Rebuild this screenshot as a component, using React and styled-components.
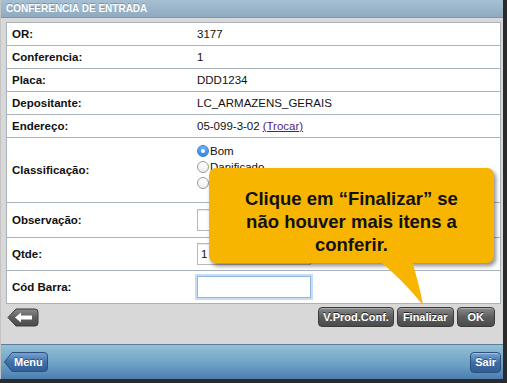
import React from 'react'
import styled, { createGlobalStyle } from 'styled-components'

const GlobalStyle = createGlobalStyle`
  html, body { margin: 0; padding: 0; background: #2b2b2b; }
  body { font-family: "Liberation Sans", Arial, sans-serif; }
`

const rows = [
  { label: 'OR:', value: '3177' },
  { label: 'Conferencia:', value: '1' },
  { label: 'Placa:', value: 'DDD1234' },
  { label: 'Depositante:', value: 'LC_ARMAZENS_GERAIS' },
  { label: 'Endereço:', value: '05-099-3-02', link: '(Trocar)' }
]

const Screen = styled.div`
  position: relative;
  width: 503px;
  height: 379px;
  background: #d8d8d8;
  display: flex;
  flex-direction: column;
  border-left: 1px solid #c4c4c4;
  box-sizing: border-box;
  overflow: hidden;
`

const Header = styled.div`
  height: 17px;
  background: linear-gradient(#a6bfd2, #8faac0);
  border-bottom: 1px solid #7c95a9;
  color: #fff;
  font-weight: bold;
  font-size: 10px;
  line-height: 17px;
  padding-left: 5px;
  text-shadow: 0 -1px 0 rgba(60, 80, 100, 0.4);
`

const Table = styled.div`
  margin: 4px 2px 0 5px;
  background: #fff;
  border: 1px solid #a8b3bd;
  display: grid;
  grid-template-columns: 190px 1fr;
`

const Row = styled.div`
  display: contents;
  & > div {
    height: ${p => p.h}px;
    border-top: ${p => (p.first ? 'none' : '1px solid #a8b3bd')};
  }
`

const Label = styled.div`
  display: flex;
  align-items: center;
  padding-left: 5px;
  font-weight: bold;
  font-size: 11.5px;
  color: #111;
`

const Value = styled.div`
  display: flex;
  align-items: center;
  font-size: 11.5px;
  color: #111;
`

const Link = styled.a`
  color: #551a8b;
  text-decoration: underline;
  margin-left: 3px;
`

const RadioList = styled.div`
  display: flex;
  flex-direction: column;
  justify-content: flex-start;
  padding-top: 7px;
  gap: 4px;
  height: 100%;
  box-sizing: border-box;
`

const RadioItem = styled.label`
  display: flex;
  align-items: center;
  font-size: 11.5px;
  color: #111;
  height: 12px;
`

const RadioDot = styled.span`
  width: 12px;
  height: 12px;
  border-radius: 50%;
  box-sizing: border-box;
  margin-right: 1px;
  display: flex;
  align-items: center;
  justify-content: center;
  background: ${p => (p.checked ? 'linear-gradient(#6fb1f5, #2f86ea)' : 'linear-gradient(#fff, #eee)')};
  border: 1px solid ${p => (p.checked ? '#3a80d0' : '#9a9a9a')};
  &::after {
    content: '';
    width: 4px;
    height: 4px;
    border-radius: 50%;
    background: #fff;
    display: ${p => (p.checked ? 'block' : 'none')};
  }
`

const Input = styled.div`
  width: 114px;
  height: 22px;
  box-sizing: border-box;
  background: #fff;
  border: 1px solid ${p => (p.focus ? '#8fb6e0' : '#b9b9b9')};
  box-shadow: ${p => (p.focus ? '0 0 0 2px #c8dcf3' : 'inset 0 1px 1px rgba(0,0,0,0.08)')};
  font-size: 11.5px;
  padding-left: 3px;
  display: flex;
  align-items: center;
`

const ButtonBar = styled.div`
  display: flex;
  align-items: center;
  margin: 3px 8px 0 6px;
  height: 20px;
`

const Spacer = styled.div`
  flex: 1;
`

const DarkButton = styled.button`
  height: 20px;
  padding: 0 ${p => p.px || 4}px;
  margin-left: 3px;
  border-radius: 4px;
  border: 1px solid #3a3a3a;
  background: linear-gradient(#8a8a8a, #5d5d5d 50%, #4b4b4b);
  color: #fff;
  font-family: "Liberation Sans", Arial, sans-serif;
  font-weight: bold;
  font-size: 11px;
  text-shadow: 0 -1px 0 #222;
  box-shadow: inset 0 1px 0 rgba(255,255,255,0.3);
  cursor: pointer;
`

const BottomBar = styled.div`
  margin-top: auto;
  height: 35px;
  background: linear-gradient(#93c0d6, #6a9fc4 60%, #4b7db0);
  border-top: 1px solid #5d7f99;
  display: flex;
  align-items: center;
  justify-content: space-between;
  padding: 0 2px 0 3px;
  box-sizing: border-box;
`

const BarButton = styled.div`
  position: relative;
  height: 20px;
  width: 44px;
  display: flex;
  align-items: center;
  color: #fff;
  font-weight: bold;
  font-size: 11px;
  text-shadow: 0 -1px 0 rgba(0,0,0,0.4);
`

const BarLabel = styled.span`
  position: relative;
  margin-left: 10px;
`

const SairButton = styled.div`
  height: 19px;
  padding: 0 4px;
  border-radius: 4px;
  border: 1px solid #2c4f7c;
  background: linear-gradient(#78a3d3, #3f6ea6 50%, #2f5d94);
  color: #fff;
  font-weight: bold;
  font-size: 11px;
  line-height: 19px;
  text-shadow: 0 -1px 0 rgba(0,0,0,0.4);
  box-shadow: inset 0 1px 0 rgba(255,255,255,0.35);
`

const Callout = styled.div`
  position: absolute;
  left: 208px;
  top: 168px;
  width: 285px;
  height: 95px;
  box-sizing: border-box;
  background: #f7b500;
  border-radius: 7px;
  box-shadow: 2px 3px 4px rgba(0,0,0,0.45);
  display: flex;
  align-items: center;
  justify-content: center;
  text-align: center;
  font-weight: bold;
  font-size: 18.5px;
  line-height: 23px;
  color: #111;
  padding-top: 12px;
`

const Tail = styled.svg`
  position: absolute;
  left: 370px;
  top: 258px;
  overflow: visible;
`

const BackArrow = () => (
  <svg width="32" height="19" viewBox="0 0 32 19">
    <defs>
      <linearGradient id="bg" x1="0" y1="0" x2="0" y2="1">
        <stop offset="0" stopColor="#8b8b8b" />
        <stop offset="0.5" stopColor="#5e5e5e" />
        <stop offset="1" stopColor="#4a4a4a" />
      </linearGradient>
    </defs>
    <path d="M1 9.5 L9 1 H28 Q31 1 31 4 V15 Q31 18 28 18 H9 Z" fill="url(#bg)" stroke="#3a3a3a" />
    <path d="M8 9.5 L14 4.5 V7.5 H25 V11.5 H14 V14.5 Z" fill="#fff" />
  </svg>
)

const MenuShape = () => (
  <svg width="44" height="20" viewBox="0 0 44 20" style={{ position: 'absolute', left: 0, top: 0 }}>
    <defs>
      <linearGradient id="mg" x1="0" y1="0" x2="0" y2="1">
        <stop offset="0" stopColor="#7aa4d3" />
        <stop offset="0.5" stopColor="#4070a8" />
        <stop offset="1" stopColor="#305e95" />
      </linearGradient>
    </defs>
    <path d="M0.5 10 L8 0.5 H40 Q43.5 0.5 43.5 4 V16 Q43.5 19.5 40 19.5 H8 Z" fill="url(#mg)" stroke="#2c4f7c" />
  </svg>
)

export default function App() {
  return (
    <>
      <GlobalStyle />
      <Screen>
        <Header>CONFERENCIA DE ENTRADA</Header>
        <Table>
          {rows.map((r, i) => (
            <Row key={r.label} h={22} first={i === 0}>
              <Label>{r.label}</Label>
              <Value>
                {r.value}
                {r.link && <Link href="#">{r.link}</Link>}
              </Value>
            </Row>
          ))}
          <Row h={64}>
            <Label>Classificação:</Label>
            <Value>
              <RadioList>
                <RadioItem><RadioDot checked />Bom</RadioItem>
                <RadioItem><RadioDot />Danificado</RadioItem>
                <RadioItem><RadioDot />Avariado</RadioItem>
              </RadioList>
            </Value>
          </Row>
          <Row h={34}>
            <Label>Observação:</Label>
            <Value><Input /></Value>
          </Row>
          <Row h={32}>
            <Label>Qtde:</Label>
            <Value><Input>1</Input></Value>
          </Row>
          <Row h={32}>
            <Label>Cód Barra:</Label>
            <Value><Input focus /></Value>
          </Row>
        </Table>
        <ButtonBar>
          <BackArrow />
          <Spacer />
          <DarkButton>V.Prod.Conf.</DarkButton>
          <DarkButton px={5}>Finalizar</DarkButton>
          <DarkButton px={10}>OK</DarkButton>
        </ButtonBar>
        <BottomBar>
          <BarButton>
            <MenuShape />
            <BarLabel>Menu</BarLabel>
          </BarButton>
          <SairButton>Sair</SairButton>
        </BottomBar>
        <Callout>
          Clique em “Finalizar” se<br />não houver mais itens a<br />conferir.
        </Callout>
        <Tail width="80" height="50">
          <path d="M5 0 Q30 20 52 47 Q48 25 40 0 Z" fill="#f7b500" />
        </Tail>
      </Screen>
    </>
  )
}
